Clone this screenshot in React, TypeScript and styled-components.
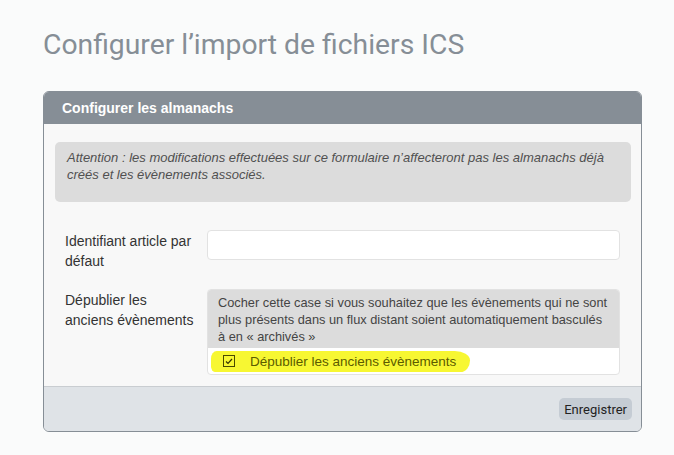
import styled, { createGlobalStyle } from "styled-components";

const GlobalStyle = createGlobalStyle`
    body {
        margin: 0;
        background: #fafbfb;
        font-family: "Liberation Sans", Arial, sans-serif;
    }
`;

const Page = styled.div`
    padding: 27px 32px 24px 43px;
`;

const Title = styled.h1`
    margin: 0 0 28px;
    font-family: Roboto, "Liberation Sans", sans-serif;
    font-weight: 400;
    font-size: 28.3px;
    line-height: 36px;
    color: #868e96;
`;

const Panel = styled.section`
    width: 597px;
    border: 1px solid #868e96;
    border-radius: 6px;
    overflow: hidden;
    background: #f8f8f8;
`;

const PanelHeader = styled.header`
    height: 32px;
    display: flex;
    align-items: center;
    padding: 0 18px;
    background: #868e96;
    color: #fff;
    font-weight: bold;
    font-size: 14px;
`;

const PanelBody = styled.div`
    padding: 18px 10px 11px 11px;
`;

const Alert = styled.div`
    height: 60px;
    box-sizing: border-box;
    padding: 7px 12px;
    background: #dcdcdc;
    border-radius: 5px;
    font-style: italic;
    font-size: 13px;
    line-height: 17px;
    color: #505050;
`;

const Row = styled.div<{ $top: number }>`
    display: grid;
    grid-template-columns: 142px 1fr;
    margin-top: ${(p) => p.$top}px;
    padding: 0 11px 0 10px;
`;

const Label = styled.label`
    font-size: 14px;
    line-height: 20px;
    color: #333;
    padding: 1px 12px 0 0;
`;

const Input = styled.input`
    height: 30px;
    box-sizing: border-box;
    border: 1px solid #e2e2e2;
    border-radius: 4px;
    background: #fff;
    outline: none;
`;

const OptionBox = styled.div`
    border: 1px solid #e2e2e2;
    border-radius: 4px;
    overflow: hidden;
    background: #fff;
`;

const Hint = styled.div`
    background: #dcdcdc;
    padding: 4px 6px 3px 10px;
    font-size: 12.8px;
    line-height: 17px;
    white-space: nowrap;
    overflow: hidden;
    color: #444;
`;

const CheckLine = styled.div`
    height: 26px;
    display: flex;
    align-items: center;
    padding-left: 15px;
`;

const Highlight = styled.span`
    display: inline-flex;
    align-items: center;
    gap: 15px;
    margin-left: -12px;
    padding: 3px 14px 3px 12px;
    background: #f7f732;
    border-radius: 6px 16px 10px 4px / 8px 10px 12px 6px;
    font-size: 13.5px;
    color: #5b5b00;
`;

const Box = styled.span`
    width: 10px;
    height: 10px;
    border: 1px solid #4a4a00;
    display: inline-flex;
    align-items: center;
    justify-content: center;
`;

const Footer = styled.footer`
    height: 44px;
    display: flex;
    align-items: center;
    justify-content: flex-end;
    padding-right: 9px;
    background: #dfe3e7;
    border-top: 1px solid #c9cdd1;
`;

const Button = styled.button`
    height: 22px;
    padding: 0 5px;
    border: none;
    border-radius: 5px;
    background: #c5ccd4;
    font-family: Roboto, "Liberation Sans", sans-serif;
    font-size: 13px;
    color: #222;
`;

export default function App() {
    return (
        <Page>
            <GlobalStyle />
            <Title>Configurer l’import de fichiers ICS</Title>
            <Panel>
                <PanelHeader>Configurer les almanachs</PanelHeader>
                <PanelBody>
                    <Alert>
                        Attention : les modifications effectuées sur ce formulaire n’affecteront pas les almanachs déjà
                        créés et les évènements associés.
                    </Alert>
                    <Row $top={28}>
                        <Label>Identifiant article par défaut</Label>
                        <Input />
                    </Row>
                    <Row $top={18}>
                        <Label>Dépublier les anciens évènements</Label>
                        <OptionBox>
                            <Hint>
                                Cocher cette case si vous souhaitez que les évènements qui ne sont
                                <br />
                                plus présents dans un flux distant soient automatiquement basculés
                                <br />à en « archivés »
                            </Hint>
                            <CheckLine>
                                <Highlight>
                                    <Box>
                                        <svg width="8" height="7" viewBox="0 0 8 7">
                                            <path d="M1 3.5 L3 5.5 L7 1" fill="none" stroke="#333300" strokeWidth="1.2" />
                                        </svg>
                                    </Box>
                                    Dépublier les anciens évènements
                                </Highlight>
                            </CheckLine>
                        </OptionBox>
                    </Row>
                </PanelBody>
                <Footer>
                    <Button>Enregistrer</Button>
                </Footer>
            </Panel>
        </Page>
    );
}
